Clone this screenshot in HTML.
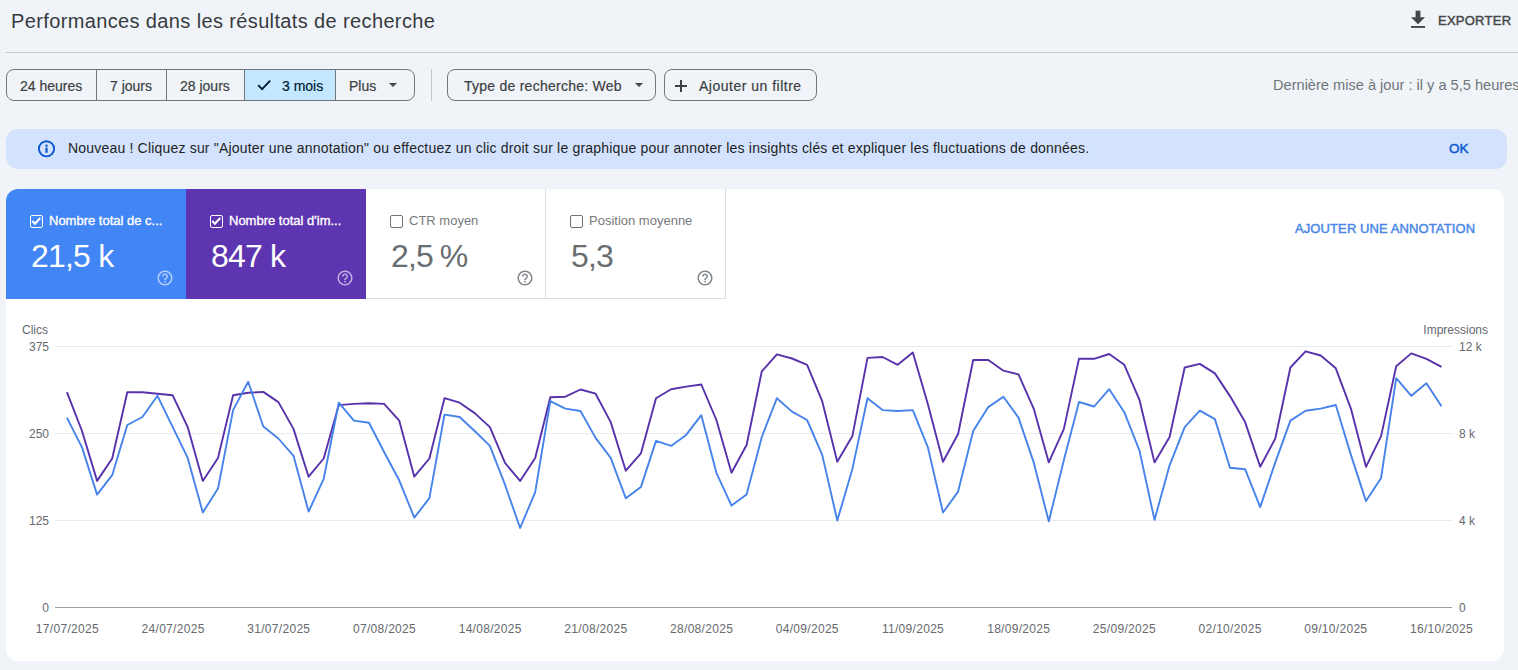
<!DOCTYPE html>
<html lang="fr">
<head>
<meta charset="utf-8">
<title>Performances</title>
<style>
*{box-sizing:border-box;margin:0;padding:0}
html,body{width:1518px;height:670px;overflow:hidden}
body{background:#f0f4f9;font-family:"Liberation Sans",sans-serif;position:relative;color:#1f1f1f}
.a{position:absolute;white-space:nowrap;line-height:1}
.title{left:11px;top:11px;font-size:20px;color:#373a3e;letter-spacing:0.37px}
.hr{position:absolute;left:6px;right:0;top:52px;height:1px;background:#c4c7cb}
.exp{left:1438px;top:14px;font-size:13px;color:#444746;letter-spacing:0.25px;-webkit-text-stroke:0.45px #444746}
.seg{position:absolute;left:6px;top:69px;height:32px;width:409px;border:1px solid #747775;border-radius:8px;overflow:hidden;display:flex}
.seg div{height:30px;border-right:1px solid #747775;font-size:14px;color:#3c4043;position:relative;-webkit-text-stroke:0.2px currentColor}
.seg div:last-child{border-right:none}
.vsep{position:absolute;left:431px;top:69px;width:1px;height:32px;background:#c7c7c7}
.chip{position:absolute;top:69px;height:32px;border:1px solid #747775;border-radius:8px}
.upd{left:1273px;top:77.5px;font-size:14.6px;color:#6f7479}
.banner{position:absolute;left:6px;top:129px;width:1501px;height:40px;background:#d3e3fd;border-radius:12px}
.card{position:absolute;left:6px;top:189px;width:1498px;height:472px;background:#fff;border-radius:12px;overflow:hidden}
.tile{position:absolute;top:0;height:110px;width:180px}
.tile .lbl{position:absolute;left:43px;top:25px;font-size:13px;line-height:1;white-space:nowrap}
.tile .val{position:absolute;left:25px;top:51px;font-size:32px;line-height:1;white-space:nowrap;letter-spacing:-0.8px}
.tile .cb{position:absolute;left:24px;top:26px;width:13px;height:13px;border-radius:2px}
.tile .hlp{position:absolute;left:150px;top:80px;width:18px;height:18px}
.lab{font-size:12px;color:#5f6368}
</style>
</head>
<body>
<div class="a title">Performances dans les résultats de recherche</div>
<div class="hr"></div>
<svg style="position:absolute;left:1411px;top:10px" width="14" height="18" viewBox="0 0 14 18"><rect x="4.6" y="0.7" width="4.8" height="7.2" fill="#444746"/><path d="M0 7.3h14L7 14.2z" fill="#444746"/><rect x="0" y="16" width="14" height="1.9" fill="#444746"/></svg>
<div class="a exp">EXPORTER</div>

<div class="seg">
  <div style="width:90px"><span class="a" style="left:13px;top:9px">24 heures</span></div>
  <div style="width:70px"><span class="a" style="left:13px;top:9px">7 jours</span></div>
  <div style="width:78px"><span class="a" style="left:13px;top:9px">28 jours</span></div>
  <div style="width:91px;background:#c2e7ff;color:#001d35">
    <svg style="position:absolute;left:11px;top:9px" width="16" height="12" viewBox="0 0 16 12"><path d="M2.2 6.2l3.9 3.9L14.2 1.6" stroke="#001d35" stroke-width="1.9" fill="none"/></svg>
    <span class="a" style="left:37px;top:9px">3 mois</span></div>
  <div style="flex:1"><span class="a" style="left:13px;top:9px">Plus</span>
    <svg style="position:absolute;left:51px;top:9px" width="12" height="12" viewBox="0 0 12 12"><path d="M2 4h8l-4 4z" fill="#444746"/></svg></div>
</div>
<div class="vsep"></div>
<div class="chip" style="left:447px;width:209px">
  <span class="a" style="left:16px;top:9px;font-size:14px;color:#3c4043;letter-spacing:0.25px;-webkit-text-stroke:0.2px #3c4043">Type de recherche: Web</span>
  <svg style="position:absolute;left:185px;top:9px" width="12" height="12" viewBox="0 0 12 12"><path d="M2 4h8l-4 4z" fill="#444746"/></svg>
</div>
<div class="chip" style="left:664px;width:153px">
  <svg style="position:absolute;left:8px;top:8px" width="16" height="16" viewBox="0 0 16 16"><path d="M8 2v12M2 8h12" stroke="#3c4043" stroke-width="2"/></svg>
  <span class="a" style="left:34px;top:9px;font-size:14px;color:#3c4043;letter-spacing:0.5px;-webkit-text-stroke:0.2px #3c4043">Ajouter un filtre</span>
</div>
<div class="a upd">Dernière mise à jour : il y a 5,5 heures</div>

<div class="banner">
  <svg style="position:absolute;left:30px;top:10px" width="20" height="20" viewBox="0 0 20 20"><circle cx="10.5" cy="9.8" r="7.6" stroke="#0b57d0" stroke-width="1.9" fill="none"/><rect x="9.4" y="8.6" width="2.2" height="5.2" fill="#0b57d0"/><rect x="9.4" y="5.6" width="2.2" height="2.1" fill="#0b57d0"/></svg>
  <span class="a" style="left:62px;top:12px;font-size:14px;color:#1f1f1f;letter-spacing:0.19px">Nouveau ! Cliquez sur "Ajouter une annotation" ou effectuez un clic droit sur le graphique pour annoter les insights clés et expliquer les fluctuations de données.</span>
  <span class="a" style="left:1443px;top:13px;font-size:13.5px;color:#0b57d0;-webkit-text-stroke:0.45px #0b57d0">OK</span>
</div>

<div class="card">
  <div class="tile" style="left:0;background:#4285f4;color:#fff">
    <div class="cb" style="border:1.6px solid #fff"><svg style="position:absolute;left:0;top:0" width="10" height="10" viewBox="0 0 10 10"><path d="M1.3 5.1l2.6 2.6L9.3 2.0" stroke="#fff" stroke-width="2.1" fill="none"/></svg></div>
    <div class="lbl" style="-webkit-text-stroke:0.35px #fff">Nombre total de c...</div>
    <div class="val">21,5 k</div>
    <svg class="hlp" viewBox="0 0 24 24"><path d="M11 18h2v-2h-2v2zm1-16C6.48 2 2 6.48 2 12s4.48 10 10 10 10-4.48 10-10S17.52 2 12 2zm0 18c-4.41 0-8-3.59-8-8s3.59-8 8-8 8 3.59 8 8-3.59 8-8 8zm0-14c-2.21 0-4 1.79-4 4h2c0-1.1.9-2 2-2s2 .9 2 2c0 2-3 1.75-3 5h2c0-2.25 3-2.5 3-5 0-2.21-1.79-4-4-4z" fill="rgba(255,255,255,0.6)"/></svg>
  </div>
  <div class="tile" style="left:180px;background:#5e35b1;color:#fff">
    <div class="cb" style="border:1.6px solid #fff"><svg style="position:absolute;left:0;top:0" width="10" height="10" viewBox="0 0 10 10"><path d="M1.3 5.1l2.6 2.6L9.3 2.0" stroke="#fff" stroke-width="2.1" fill="none"/></svg></div>
    <div class="lbl" style="-webkit-text-stroke:0.35px #fff">Nombre total d'im...</div>
    <div class="val">847 k</div>
    <svg class="hlp" viewBox="0 0 24 24"><path d="M11 18h2v-2h-2v2zm1-16C6.48 2 2 6.48 2 12s4.48 10 10 10 10-4.48 10-10S17.52 2 12 2zm0 18c-4.41 0-8-3.59-8-8s3.59-8 8-8 8 3.59 8 8-3.59 8-8 8zm0-14c-2.21 0-4 1.79-4 4h2c0-1.1.9-2 2-2s2 .9 2 2c0 2-3 1.75-3 5h2c0-2.25 3-2.5 3-5 0-2.21-1.79-4-4-4z" fill="rgba(255,255,255,0.6)"/></svg>
  </div>
  <div class="tile" style="left:360px;border-right:1px solid #dadce0;border-bottom:1px solid #dadce0;color:#5f6368">
    <div class="cb" style="border:1.6px solid #6f7276"></div>
    <div class="lbl" style="color:#777a7e">CTR moyen</div>
    <div class="val" style="color:#6a6d70;word-spacing:-1.5px">2,5 %</div>
    <svg class="hlp" viewBox="0 0 24 24"><path d="M11 18h2v-2h-2v2zm1-16C6.48 2 2 6.48 2 12s4.48 10 10 10 10-4.48 10-10S17.52 2 12 2zm0 18c-4.41 0-8-3.59-8-8s3.59-8 8-8 8 3.59 8 8-3.59 8-8 8zm0-14c-2.21 0-4 1.79-4 4h2c0-1.1.9-2 2-2s2 .9 2 2c0 2-3 1.75-3 5h2c0-2.25 3-2.5 3-5 0-2.21-1.79-4-4-4z" fill="#80868b"/></svg>
  </div>
  <div class="tile" style="left:540px;border-right:1px solid #dadce0;border-bottom:1px solid #dadce0;color:#5f6368">
    <div class="cb" style="border:1.6px solid #6f7276"></div>
    <div class="lbl" style="color:#777a7e">Position moyenne</div>
    <div class="val" style="color:#6a6d70">5,3</div>
    <svg class="hlp" viewBox="0 0 24 24"><path d="M11 18h2v-2h-2v2zm1-16C6.48 2 2 6.48 2 12s4.48 10 10 10 10-4.48 10-10S17.52 2 12 2zm0 18c-4.41 0-8-3.59-8-8s3.59-8 8-8 8 3.59 8 8-3.59 8-8 8zm0-14c-2.21 0-4 1.79-4 4h2c0-1.1.9-2 2-2s2 .9 2 2c0 2-3 1.75-3 5h2c0-2.25 3-2.5 3-5 0-2.21-1.79-4-4-4z" fill="#80868b"/></svg>
  </div>
  <div class="a" style="left:1289px;top:33px;font-size:13px;color:#4a86e8;letter-spacing:0.1px;-webkit-text-stroke:0.45px #4a86e8">AJOUTER UNE ANNOTATION</div>
</div>

<svg style="position:absolute;left:0;top:0" width="1518" height="670">
  <g stroke="#e8eaed" stroke-width="1">
    <line x1="55" y1="346.5" x2="1452" y2="346.5"/>
    <line x1="55" y1="433.5" x2="1452" y2="433.5"/>
    <line x1="55" y1="520.5" x2="1452" y2="520.5"/>
  </g>
  <line x1="55" y1="607.5" x2="1452" y2="607.5" stroke="#9e9e9e" stroke-width="1"/>
  <polyline fill="none" stroke="#5732ab" stroke-width="1.9" stroke-linejoin="round" points="66.9,392.2 82.0,431.0 97.1,480.9 112.2,458.5 127.3,392.2 142.4,392.2 157.5,393.7 172.6,395.2 187.7,427.1 202.8,480.9 218.0,457.9 233.1,395.2 248.2,392.8 263.3,391.9 278.4,402.1 293.5,428.9 308.6,476.7 323.7,458.5 338.8,405.1 353.9,403.9 369.0,403.3 384.1,403.9 399.2,420.6 414.3,476.7 429.4,458.5 444.5,398.2 459.6,402.7 474.7,413.1 489.9,427.1 505.0,462.9 520.1,480.9 535.2,457.9 550.3,397.3 565.4,396.7 580.5,389.5 595.6,393.7 610.7,422.1 625.8,470.7 640.9,453.4 656.0,398.2 671.1,389.2 686.2,386.6 701.3,384.5 716.4,420.0 731.5,472.8 746.6,445.0 761.8,371.3 776.9,354.3 792.0,358.5 807.1,364.8 822.2,401.2 837.3,461.8 852.4,436.1 867.5,357.9 882.6,357.0 897.7,364.8 912.8,352.5 927.9,404.2 943.0,461.8 958.1,434.0 973.2,360.0 988.3,360.0 1003.4,370.7 1018.5,374.3 1033.7,408.6 1048.8,462.4 1063.9,428.9 1079.0,358.6 1094.1,358.8 1109.2,354.0 1124.3,364.8 1139.4,399.7 1154.5,462.4 1169.6,437.0 1184.7,367.5 1199.8,363.9 1214.9,373.4 1230.0,396.1 1245.1,422.1 1260.2,466.8 1275.3,438.5 1290.4,367.5 1305.6,351.3 1320.7,355.5 1335.8,368.3 1350.9,408.6 1366.0,466.8 1381.1,436.1 1396.2,366.3 1411.3,353.4 1426.4,358.8 1441.5,366.9"/>
  <polyline fill="none" stroke="#4683ea" stroke-width="1.9" stroke-linejoin="round" points="66.9,417.6 82.0,447.4 97.1,494.6 112.2,475.2 127.3,425.0 142.4,417.0 157.5,395.8 172.6,426.8 187.7,457.9 202.8,512.5 218.0,488.6 233.1,410.1 248.2,381.8 263.3,426.5 278.4,438.5 293.5,455.8 308.6,511.6 323.7,478.8 338.8,402.7 353.9,420.6 369.0,422.7 384.1,452.0 399.2,480.3 414.3,517.6 429.4,498.2 444.5,414.6 459.6,417.0 474.7,431.0 489.9,445.9 505.0,484.7 520.1,528.0 535.2,492.2 550.3,401.2 565.4,408.6 580.5,411.0 595.6,437.9 610.7,457.9 625.8,498.2 640.9,487.1 656.0,440.9 671.1,445.9 686.2,434.9 701.3,415.2 716.4,472.8 731.5,505.6 746.6,494.6 761.8,437.0 776.9,398.2 792.0,411.6 807.1,420.0 822.2,454.9 837.3,520.5 852.4,468.9 867.5,398.2 882.6,410.1 897.7,411.0 912.8,410.1 927.9,447.4 943.0,512.5 958.1,491.6 973.2,431.0 988.3,407.1 1003.4,396.7 1018.5,417.6 1033.7,462.4 1048.8,521.4 1063.9,460.0 1079.0,402.0 1094.1,406.5 1109.2,389.2 1124.3,412.2 1139.4,450.4 1154.5,519.9 1169.6,465.3 1184.7,427.1 1199.8,410.7 1214.9,419.1 1230.0,467.7 1245.1,469.2 1260.2,507.1 1275.3,462.4 1290.4,420.6 1305.6,410.7 1320.7,408.6 1335.8,405.0 1350.9,454.9 1366.0,501.1 1381.1,477.9 1396.2,378.2 1411.3,395.8 1426.4,383.3 1441.5,406.2"/>
  <g font-family="Liberation Sans" font-size="12" fill="#66696d">
    <text x="22" y="334">Clics</text>
    <text x="1488" y="334" text-anchor="end">Impressions</text>
    <text x="49" y="351" text-anchor="end">375</text>
    <text x="49" y="438" text-anchor="end">250</text>
    <text x="49" y="525" text-anchor="end">125</text>
    <text x="49" y="612" text-anchor="end">0</text>
    <text x="1459" y="351">12 k</text>
    <text x="1459" y="438">8 k</text>
    <text x="1459" y="525">4 k</text>
    <text x="1459" y="612">0</text>
    <text x="67.4" y="633" text-anchor="middle" letter-spacing="0.3">17/07/2025</text>
    <text x="173.1" y="633" text-anchor="middle" letter-spacing="0.3">24/07/2025</text>
    <text x="278.8" y="633" text-anchor="middle" letter-spacing="0.3">31/07/2025</text>
    <text x="384.5" y="633" text-anchor="middle" letter-spacing="0.3">07/08/2025</text>
    <text x="490.2" y="633" text-anchor="middle" letter-spacing="0.3">14/08/2025</text>
    <text x="595.9" y="633" text-anchor="middle" letter-spacing="0.3">21/08/2025</text>
    <text x="701.6" y="633" text-anchor="middle" letter-spacing="0.3">28/08/2025</text>
    <text x="807.3" y="633" text-anchor="middle" letter-spacing="0.3">04/09/2025</text>
    <text x="913.0" y="633" text-anchor="middle" letter-spacing="0.3">11/09/2025</text>
    <text x="1018.7" y="633" text-anchor="middle" letter-spacing="0.3">18/09/2025</text>
    <text x="1124.4" y="633" text-anchor="middle" letter-spacing="0.3">25/09/2025</text>
    <text x="1230.1" y="633" text-anchor="middle" letter-spacing="0.3">02/10/2025</text>
    <text x="1335.8" y="633" text-anchor="middle" letter-spacing="0.3">09/10/2025</text>
    <text x="1441.5" y="633" text-anchor="middle" letter-spacing="0.3">16/10/2025</text>
  </g>
</svg>
</body>
</html>
